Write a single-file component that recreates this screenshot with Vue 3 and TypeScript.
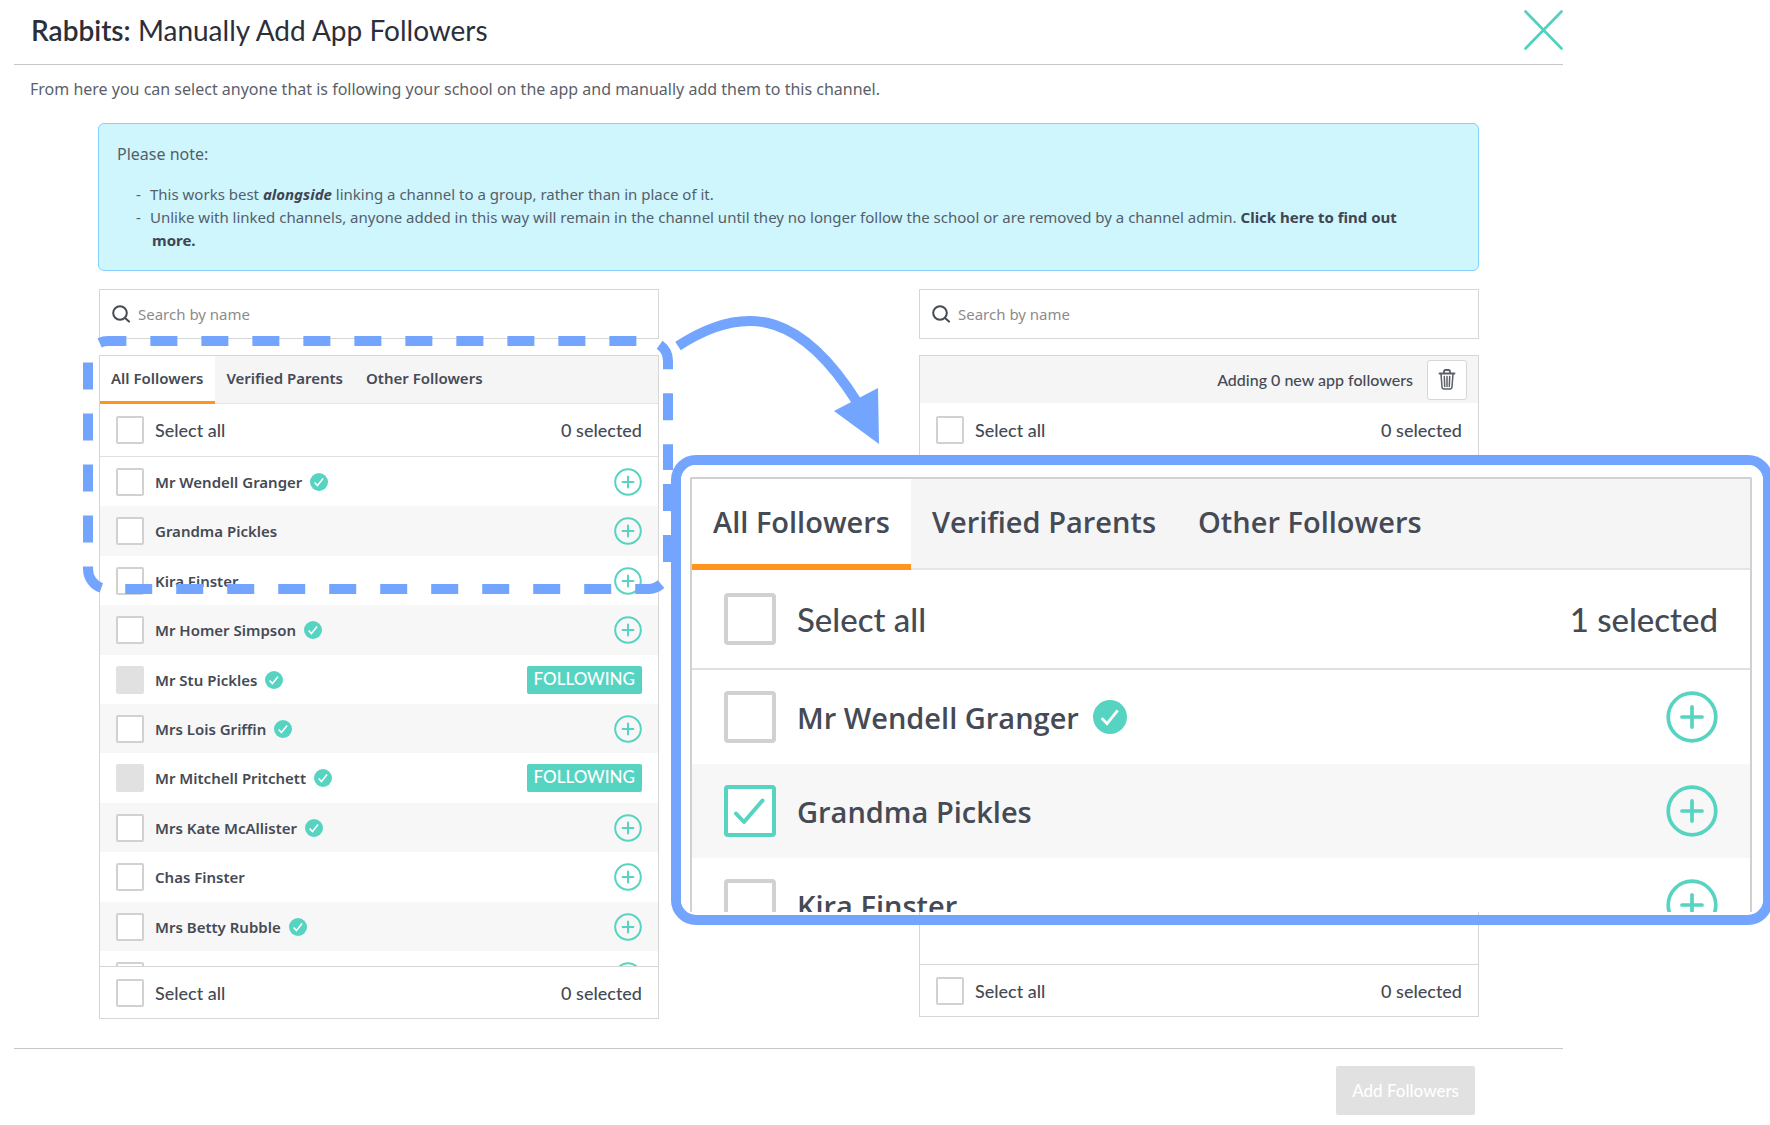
<script setup lang="ts">
import { ref } from 'vue'

interface Follower {
  id: number
  name: string
  verified?: boolean
  following?: boolean
  checked?: boolean
}

const tabs = ['All Followers', 'Verified Parents', 'Other Followers']
const activeTab = ref(tabs[0])

const followers = ref<Follower[]>([
  { id: 1, name: 'Mr Wendell Granger', verified: true },
  { id: 2, name: 'Grandma Pickles' },
  { id: 3, name: 'Kira Finster' },
  { id: 4, name: 'Mr Homer Simpson', verified: true },
  { id: 5, name: 'Mr Stu Pickles', verified: true, following: true },
  { id: 6, name: 'Mrs Lois Griffin', verified: true },
  { id: 7, name: 'Mr Mitchell Pritchett', verified: true, following: true },
  { id: 8, name: 'Mrs Kate McAllister', verified: true },
  { id: 9, name: 'Chas Finster' },
  { id: 10, name: 'Mrs Betty Rubble', verified: true },
  { id: 11, name: '' },
])

const enlarged = ref<Follower[]>([
  { id: 1, name: 'Mr Wendell Granger', verified: true },
  { id: 2, name: 'Grandma Pickles', checked: true },
  { id: 3, name: 'Kira Finster' },
])
</script>

<template>
  <div class="page">
    <svg class="defs" aria-hidden="true">
      <symbol id="icon-plus" viewBox="0 0 28 28">
        <g fill="none" stroke="#57d4c1" stroke-width="2" stroke-linecap="round">
          <circle cx="14" cy="14" r="12.8" />
          <path d="M14 8.6v10.8M8.6 14h10.8" />
        </g>
      </symbol>
      <symbol id="icon-verified" viewBox="0 0 18 18">
        <circle cx="9" cy="9" r="9" fill="#57d4c1" />
        <path d="M4.6 9.6l2.8 2.9 5.7-7" fill="none" stroke="#fff" stroke-width="1.5" />
      </symbol>
      <symbol id="icon-search" viewBox="0 0 18 18">
        <g fill="none" stroke="#454a55" stroke-width="2" stroke-linecap="round">
          <circle cx="8" cy="8" r="6.8" />
          <path d="M13 13l4 3.6" />
        </g>
      </symbol>
    </svg>

    <main class="modal">
      <header class="head">
        <h1><strong>Rabbits:</strong> Manually Add App Followers</h1>
        <button class="close" type="button" aria-label="Close">
          <svg viewBox="0 0 40 40" width="40" height="40">
            <path d="M2.500 1.500l36 37M38.500 1.500l-36 37" stroke="#4fd1bd" stroke-width="2.6" stroke-linecap="round" />
          </svg>
        </button>
      </header>

      <p class="intro">From here you can select anyone that is following your school on the app and manually add them to this channel.</p>

      <section class="note">
        <p>Please note:</p>
        <ul>
          <li>This works best <strong><em>alongside</em></strong> linking a channel to a group, rather than in place of it.</li>
          <li>Unlike with linked channels, anyone added in this way will remain in the channel until they no longer follow the school or are removed by a channel admin. <a href="#">Click here to find out more.</a></li>
        </ul>
      </section>

      <div class="columns">
        <section class="column">
          <label class="search">
            <svg width="18" height="18"><use href="#icon-search" /></svg>
            <input type="text" placeholder="Search by name" aria-label="Search followers by name" />
          </label>
          <div class="panel">
            <nav class="tabs">
              <button v-for="tab in tabs" :key="tab" type="button" :class="{ active: tab === activeTab }" @click="activeTab = tab">{{ tab }}</button>
            </nav>
            <div class="bar">
              <label><input type="checkbox" />Select all</label>
              <span>0 selected</span>
            </div>
            <ul class="list">
              <li v-for="f in followers" :key="f.id">
                <label>
                  <input v-model="f.checked" type="checkbox" :disabled="f.following" />{{ f.name }}
                </label>
                <svg v-if="f.verified" class="tick"><use href="#icon-verified" /></svg>
                <span v-if="f.following" class="badge">FOLLOWING</span>
                <button v-else class="add" type="button" aria-label="Add follower">
                  <svg><use href="#icon-plus" /></svg>
                </button>
              </li>
            </ul>
            <div class="bar foot">
              <label><input type="checkbox" />Select all</label>
              <span>0 selected</span>
            </div>
          </div>
        </section>

        <section class="column">
          <label class="search">
            <svg width="18" height="18"><use href="#icon-search" /></svg>
            <input type="text" placeholder="Search by name" aria-label="Search added followers by name" />
          </label>
          <div class="panel">
            <div class="adding">
              <span>Adding 0 new app followers</span>
              <button type="button" aria-label="Remove all">
                <svg viewBox="0 0 18 21" width="18" height="21" fill="none" stroke="#5b5f6a" stroke-width="1.5" stroke-linecap="round" stroke-linejoin="round">
                  <path d="M1.500 4.500H16.500M6 4.200V2.400Q6 1 7.400 1H10.600Q12 1 12 2.400V4.200" stroke-width="1.800" />
                  <path d="M3 5L4 18Q4.200 20 6 20H12Q13.800 20 14 18L15 5" />
                  <path d="M6.300 7.500L6.700 17.500M9 7.500V17.500M11.700 7.500L11.300 17.500" />
                </svg>
              </button>
            </div>
            <div class="bar plain">
              <label><input type="checkbox" />Select all</label>
              <span>0 selected</span>
            </div>
            <div class="empty"></div>
            <div class="bar foot">
              <label><input type="checkbox" />Select all</label>
              <span>0 selected</span>
            </div>
          </div>
        </section>
      </div>

      <footer class="actions">
        <button type="button" disabled>Add Followers</button>
      </footer>
    </main>

    <svg class="marks" width="900" height="620" viewBox="0 0 900 620" fill="none" aria-hidden="true">
      <path d="M668 484V569A20 20 0 0 1 648 589H108A20 20 0 0 1 88 569V361A20 20 0 0 1 108 341H648A20 20 0 0 1 668 361V470" stroke="#73a5ff" stroke-width="10" stroke-dasharray="27 24" />
      <path d="M678 346C750 299 804 318 857 402" stroke="#73a5ff" stroke-width="10" />
      <path d="M834 411L878 388L879 444Z" fill="#73a5ff" />
    </svg>

    <aside class="callout">
      <div class="sheet">
        <div class="panel">
          <nav class="tabs">
            <button v-for="tab in tabs" :key="tab" type="button" :class="{ active: tab === activeTab }" @click="activeTab = tab">{{ tab }}</button>
          </nav>
          <div class="bar">
            <label><input type="checkbox" />Select all</label>
            <span>1 selected</span>
          </div>
          <ul class="list">
            <li v-for="f in enlarged" :key="f.id">
              <label><input v-model="f.checked" type="checkbox" />{{ f.name }}</label>
              <svg v-if="f.verified" class="tick"><use href="#icon-verified" /></svg>
              <button class="add" type="button" aria-label="Add follower">
                <svg><use href="#icon-plus" /></svg>
              </button>
            </li>
          </ul>
        </div>
      </div>
    </aside>
  </div>
</template>

<style>
body {
  margin: 0;
  background: #fff;
}
</style>

<style scoped>
.page,
.page * {
  box-sizing: border-box;
}
.page {
  position: relative;
  min-height: 100vh;
  overflow: hidden;
  color: #454a55;
  font-family: "Noto Sans", "Open Sans", sans-serif;
  font-size: 15px;
}
.defs {
  position: absolute;
  width: 0;
  height: 0;
}
button,
input {
  margin: 0;
  padding: 0;
  border: 0;
  background: none;
  color: inherit;
  font: inherit;
}
svg {
  display: block;
  flex: none;
}
ul {
  margin: 0;
  padding: 0;
  list-style: none;
}
.modal {
  margin: 0 207px 0 14px;
}
.head {
  display: flex;
  align-items: center;
  justify-content: space-between;
  height: 65px;
  padding: 0 0 4px 17px;
  border-bottom: 1px solid #c8c8c8;
}
h1 {
  margin: 0;
  color: #2b2f3a;
  font-family: Lato, sans-serif;
  font-size: 28px;
  font-weight: 400;
}
h1 strong {
  font-weight: 600;
}
.intro {
  margin: 12px 16px 0;
  color: #5b5f6a;
  font-size: 16px;
  line-height: 24px;
}
.note {
  margin: 22px 84px 0;
  padding: 19px 48px 18px 18px;
  border: 1px solid #84d0fa;
  border-radius: 6px;
  background: #cff5fd;
  color: #535f6b;
  line-height: 23px;
}
.note p {
  margin: 0 0 17px;
  font-size: 16px;
}
.note li {
  padding-left: 35px;
  text-indent: -16px;
}
.note li::before {
  content: "-";
  display: inline-block;
  width: 14px;
  text-indent: 0;
}
.note strong,
.note a {
  color: #3e4652;
  font-weight: 700;
  text-decoration: none;
}
.columns {
  display: grid;
  grid-template-columns: 1fr 1fr;
  gap: 260px;
  margin: 18px 84px 0 85px;
}
.search {
  display: flex;
  align-items: center;
  gap: 8px;
  height: 50px;
  padding: 0 12px;
  border: 1px solid #d6d6d6;
}
.search input {
  flex: 1;
  min-width: 0;
  outline: none;
}
.search input::placeholder {
  color: #8c8c8c;
  opacity: 1;
}
.panel {
  margin-top: 16px;
  border: 1px solid #d6d6d6;
}
.tabs {
  display: flex;
  height: 48px;
  border-bottom: 1px solid #e5e5e5;
  background: #f5f5f5;
  font-weight: 600;
}
.tabs button {
  height: 48px;
  padding: 0 12px 4px 11px;
  cursor: pointer;
}
.tabs .active {
  padding-bottom: 1px;
  border-bottom: 3px solid #ff951c;
  background: #fff;
}
.bar {
  display: flex;
  align-items: center;
  justify-content: space-between;
  height: 53px;
  padding: 0 16px;
  border-bottom: 1px solid #e0e0e0;
  font-family: Lato, sans-serif;
  font-size: 18px;
  font-weight: 500;
}
.bar.foot {
  height: 52px;
  border-top: 1px solid #d6d6d6;
  border-bottom: 0;
}
.bar.plain {
  border-bottom: 0;
}
label {
  display: flex;
  align-items: center;
  gap: 11px;
}
input[type="checkbox"] {
  appearance: none;
  flex: none;
  width: 28px;
  height: 28px;
  border: 2px solid #d1d1d1;
  border-radius: 2px;
  background: #fff;
}
input[type="checkbox"]:disabled {
  border-color: #e1e1e1;
  background: #e1e1e1;
}
input[type="checkbox"]:checked {
  border-color: #57d4c1;
  background: #fff url("data:image/svg+xml,%3Csvg xmlns='http://www.w3.org/2000/svg' viewBox='0 0 44 44' fill='none' stroke='%2357d4c1' stroke-width='4' stroke-linecap='round' stroke-linejoin='round'%3E%3Cpath d='M8 24.500L16 33L34.500 11.500'/%3E%3C/svg%3E") center / 100% no-repeat;
}
.list {
  height: 509px;
  overflow: hidden;
  font-weight: 600;
}
.list li {
  display: flex;
  align-items: center;
  height: 49px;
  padding: 0 16px;
}
.list li:nth-child(5n + 2),
.list li:nth-child(5n + 4) {
  height: 50px;
}
.list li:nth-child(even) {
  background: #f7f7f7;
}
.tick {
  width: 18px;
  height: 18px;
  margin-left: 8px;
}
.add,
.badge {
  margin-left: auto;
}
.add svg {
  width: 28px;
  height: 28px;
}
.badge {
  height: 28px;
  padding: 0 7px;
  border-radius: 2px;
  background: #57d4c1;
  color: #fff;
  font-family: Lato, sans-serif;
  font-size: 17px;
  font-weight: 500;
  line-height: 26px;
}
.adding {
  display: flex;
  align-items: center;
  justify-content: flex-end;
  gap: 14px;
  height: 47px;
  padding: 0 11px;
  background: #f5f5f5;
  font-family: Lato, sans-serif;
  font-size: 16px;
  font-weight: 500;
}
.adding button {
  display: grid;
  place-items: center;
  width: 40px;
  height: 40px;
  border: 1px solid #d6d6d6;
  border-radius: 3px;
  background: #fff;
}
.empty {
  height: 508px;
}
.actions {
  display: flex;
  justify-content: flex-end;
  margin-top: 29px;
  padding: 17px 88px 10px 0;
  border-top: 1px solid #c8c8c8;
}
.actions button {
  height: 49px;
  padding: 0 16px;
  border-radius: 2px;
  background: #e1e1e1;
  color: #fff;
  font-family: Lato, sans-serif;
  font-size: 17px;
  font-weight: 500;
}
.marks {
  position: absolute;
  top: 0;
  left: 0;
  pointer-events: none;
}
.callout {
  position: absolute;
  top: 455px;
  right: -3px;
  left: 671px;
  height: 470px;
  padding-bottom: 3px;
  border: 10px solid #73a5ff;
  border-radius: 25px;
  font-family: "Open Sans", sans-serif;
}
.sheet {
  height: 447px;
  padding: 12px 11px 0 9px;
  overflow: hidden;
  border-radius: 15px 15px 12px 12px;
  background: #fff;
}
.callout .panel {
  margin-top: 0;
  border: 2px solid #d1d1d1;
  border-bottom: 0;
  border-radius: 2px 2px 0 0;
}
.callout .tabs {
  height: 91px;
  border-bottom-width: 2px;
  font-size: 29px;
}
.callout .tabs button {
  height: 91px;
  padding: 0 21px 6px;
}
.callout .tabs .active {
  padding-bottom: 0;
  border-bottom-width: 6px;
}
.callout .bar {
  height: 100px;
  padding: 0 32px;
  border-bottom-width: 2px;
  font-size: 33px;
}
.callout label {
  gap: 21px;
}
.callout input[type="checkbox"] {
  width: 52px;
  height: 52px;
  border-width: 4px;
  border-radius: 4px;
}
.callout .list {
  height: 243px;
  font-size: 29px;
}
.callout .list li {
  height: 94px;
  padding: 0 32px;
}
.callout .tick {
  width: 34px;
  height: 34px;
  margin-left: 14px;
}
.callout .add svg {
  width: 52px;
  height: 52px;
}
</style>
